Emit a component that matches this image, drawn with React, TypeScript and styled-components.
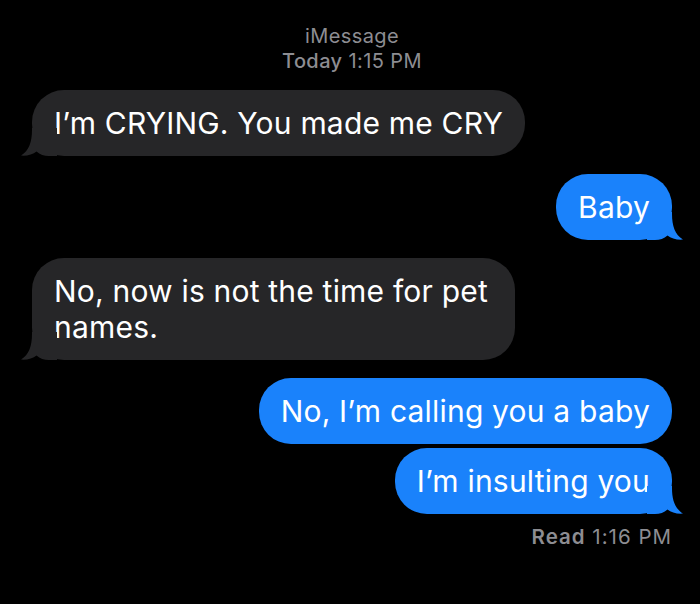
import styled, { createGlobalStyle } from "styled-components";

const GlobalStyle = createGlobalStyle`
    html, body {
        margin: 0;
        padding: 0;
        background: #000;
    }
`;

const Screen = styled.div`
    width: 700px;
    height: 604px;
    background: #000;
    font-family: Inter, "Liberation Sans", sans-serif;
    color: #fff;
    padding: 24px 28px 0 32px;
    box-sizing: border-box;
    display: flex;
    flex-direction: column;
`;

const Header = styled.div`
    display: flex;
    flex-direction: column;
    align-items: center;
    color: #8d8d92;
    font-size: 20px;
    line-height: 25px;
    letter-spacing: 0.4px;
    margin-bottom: 16px;
    b {
        font-weight: 500;
    }
`;

const Row = styled.div<{ $out?: boolean; $gap: number }>`
    display: flex;
    justify-content: ${(p) => (p.$out ? "flex-end" : "flex-start")};
    margin-top: ${(p) => p.$gap}px;
`;

const Bubble = styled.div<{ $out?: boolean; $max: number }>`
    position: relative;
    max-width: ${(p) => p.$max}px;
    box-sizing: border-box;
    padding: 15px 22px 15px 22px;
    border-radius: 32px;
    background: ${(p) => (p.$out ? "#1a82fb" : "#262628")};
    font-size: 30px;
    line-height: 36px;
    letter-spacing: 0.2px;
`;

const Tail = styled.svg<{ $out?: boolean }>`
    position: absolute;
    bottom: 0;
    width: 36px;
    height: 28px;
    ${(p) => (p.$out ? "right: -11px; transform: scaleX(-1);" : "left: -11px;")}
`;

const Receipt = styled.div`
    align-self: flex-end;
    margin-top: 10px;
    color: #8d8d92;
    font-size: 20.5px;
    line-height: 25px;
    letter-spacing: 1px;
    b {
        font-weight: 600;
    }
`;

function BubbleTail({ out, color }: { out?: boolean; color: string }) {
    return (
        <Tail $out={out} viewBox="0 0 36 28">
            <path
                d="M11 2 C11 14 8 22.5 0 27.6 C6.5 28 12 26.5 15.5 23.5 C19 26.5 23 28 28 28 L36 28 L36 0 L11 0 Z"
                fill={color}
            />
        </Tail>
    );
}

type Msg = { text: string; out?: boolean; tail?: boolean; gap: number; max?: number };

const messages: Msg[] = [
    { text: "I\u2019m CRYING. You made me CRY", tail: true, gap: 0 },
    { text: "Baby", out: true, tail: true, gap: 18 },
    { text: "No, now is not the time for pet names.", tail: true, gap: 18, max: 483 },
    { text: "No, I\u2019m calling you a baby", out: true, gap: 18 },
    { text: "I\u2019m insulting you", out: true, tail: true, gap: 4 },
];

export default function App() {
    return (
        <>
            <GlobalStyle />
            <Screen>
                <Header>
                    <span>iMessage</span>
                    <span>
                        <b>Today</b> 1:15 PM
                    </span>
                </Header>
                {messages.map((m, i) => (
                    <Row key={i} $out={m.out} $gap={m.gap}>
                        <Bubble $out={m.out} $max={m.max ?? 520}>
                            {m.tail && <BubbleTail out={m.out} color={m.out ? "#1a82fb" : "#262628"} />}
                            {m.text}
                        </Bubble>
                    </Row>
                ))}
                <Receipt>
                    <b>Read</b> 1:16 PM
                </Receipt>
            </Screen>
        </>
    );
}
